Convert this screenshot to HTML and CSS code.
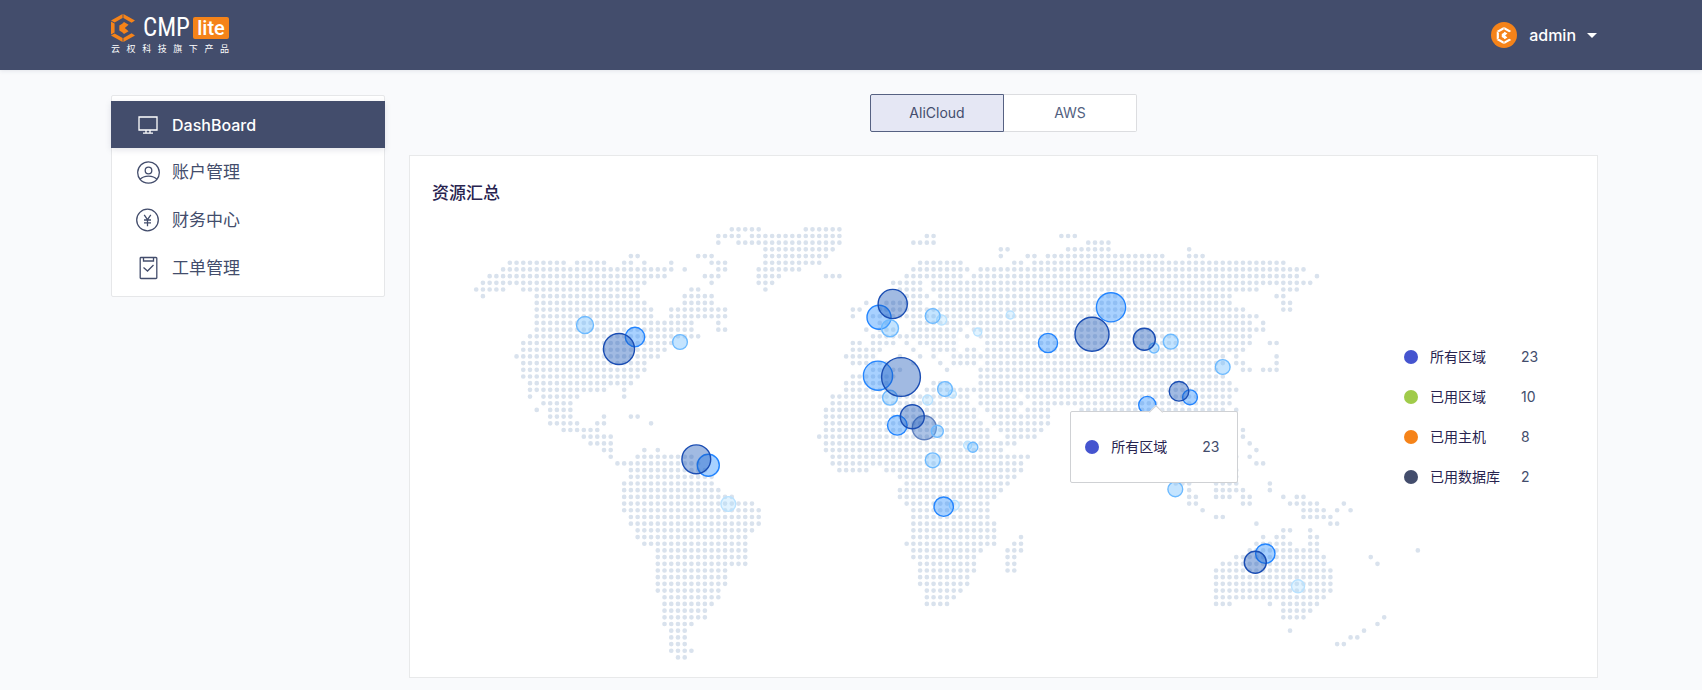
FILE: index.html
```html
<!DOCTYPE html>
<html lang="zh-CN">
<head>
<meta charset="utf-8">
<meta name="viewport" content="width=device-width, initial-scale=1">
<title>CMP lite</title>
<link rel="stylesheet" href="styles.css">
</head>
<body>
<svg class="defs" aria-hidden="true">
  <symbol id="mark" viewBox="0 0 24 28">
    <path d="M11.600 0v4L3.600 8.600 0 6.600zM12.400 0 24 6.600l-3.400 2.200L12.400 4zM0 7.600l3.600 2v9L0 20.600zM0 21.500l3.600-2.100 8 4.600v4zM12.400 28v-4l8.200-4.800L24 21.400z" fill="currentColor"/>
    <path d="m13 8 4.600 2.800-3.800 3.200 3.800 3.200L13 20l-1.800-1.800-2.900-1.700v-5l2.900-1.700z" fill="currentColor"/>
  </symbol>
</svg>

<header class="topbar">
  <a class="brand" href="#">
    <span class="brand-row">
      <svg class="brand-mark" aria-hidden="true"><use href="#mark"/></svg>
      <span class="brand-name">CMP</span>
      <span class="brand-tag">lite</span>
    </span>
    <span class="brand-sub">云 权 科 技 旗 下 产 品</span>
  </a>
  <button class="user" type="button">
    <span class="avatar"><svg class="avatar-mark" aria-hidden="true"><use href="#mark"/></svg></span>
    <span>admin</span>
    <span class="caret"></span>
  </button>
</header>

<div class="layout">
  <nav class="sidebar">
    <a class="nav-item nav-item-active" href="#">
      <svg class="nav-icon" viewBox="0 0 24 24" aria-hidden="true"><path d="M3 4h18v13H3zM10 17v3m4-3v3M7 20.200h10"/></svg>
      DashBoard
    </a>
    <a class="nav-item" href="#">
      <svg class="nav-icon" viewBox="0 0 24 24" aria-hidden="true"><path d="M4.200 19.500a10.800 10.800 0 1 1 16.600 0M4 19.400c1.800-2 4.800-3.300 8.500-3.300s6.700 1.300 8.500 3.300c-2 2.400-5 3.700-8.500 3.700S6 21.800 4 19.400z"/><circle cx="12.500" cy="10.500" r="3.300"/></svg>
      账户管理
    </a>
    <a class="nav-item" href="#">
      <svg class="nav-icon" viewBox="0 0 24 24" aria-hidden="true"><circle cx="11.500" cy="12" r="10.800"/><path d="m8.200 6.800 3.300 4.700 3.300-4.700M11.500 11.500v6.700M8 12h7M8 14.800h7"/></svg>
      财务中心
    </a>
    <a class="nav-item" href="#">
      <svg class="nav-icon" viewBox="0 0 24 24" aria-hidden="true"><path d="M5 1.500h15a.8.8 0 0 1 .8.8v19.400a.8.8 0 0 1-.8.8H5a.8.8 0 0 1-.8-.8V2.300a.8.8 0 0 1 .8-.8zM7.500 1.500V5h10V1.500M7.500 11.500l4 3.500 6-6"/></svg>
      工单管理
    </a>
  </nav>

  <main class="main">
    <div class="tabs">
      <button class="tab tab-active" type="button">AliCloud</button>
      <button class="tab" type="button">AWS</button>
    </div>

    <section class="panel">
      <h1 class="panel-title">资源汇总</h1>
      <div class="panel-body">
        <div class="map-wrap">
          <svg class="map" viewBox="474 222 930 440" role="img" aria-label="资源汇总">
            <path id="land" class="land" transform="translate(476.200 229.300) scale(6.726 6.690)"/>
            <g id="bubbles"></g>
          </svg>
          <div class="tooltip">
            <span class="dot dot-all"></span>
            <span class="label">所有区域</span>
            <span class="value">23</span>
          </div>
        </div>
        <ul class="legend">
          <li class="legend-item"><span class="dot dot-all"></span><span class="label">所有区域</span><span class="value">23</span></li>
          <li class="legend-item"><span class="dot dot-region"></span><span class="label">已用区域</span><span class="value">10</span></li>
          <li class="legend-item"><span class="dot dot-host"></span><span class="label">已用主机</span><span class="value">8</span></li>
          <li class="legend-item"><span class="dot dot-db"></span><span class="label">已用数据库</span><span class="value">2</span></li>
        </ul>
      </div>
    </section>
  </main>
</div>
<script src="map.js"></script>
</body>
</html>
```

FILE: styles.css
```css
* {
  box-sizing: border-box;
}

body {
  margin: 0;
  min-height: 100vh;
  background: #f9fafc;
  color: #434d6c;
  font-family: Inter, "Noto Sans CJK SC", sans-serif;
  font-size: 14px;
  line-height: 20px;
}

a {
  color: inherit;
  text-decoration: none;
}

button {
  padding: 0;
  border: 0;
  background: none;
  color: inherit;
  font: inherit;
  cursor: pointer;
}

.defs {
  position: absolute;
  width: 0;
  height: 0;
}

/* Header */
.topbar {
  display: flex;
  align-items: center;
  justify-content: space-between;
  height: 70px;
  padding: 0 105px 0 111px;
  background: #434d6c;
  color: #fff;
  box-shadow: 0 1px 4px rgba(67, 77, 108, 0.12);
}

.brand {
  width: 118px;
}

.brand-row {
  display: flex;
  align-items: center;
  height: 28px;
}

.brand-mark {
  width: 24px;
  height: 28px;
  color: #f58319;
}

.brand-name {
  margin-left: 8px;
  font-family: "Liberation Sans Narrow", "Roboto Condensed", Roboto, sans-serif;
  font-size: 25px;
  line-height: 28px;
}

.brand-tag {
  width: 36px;
  margin-left: auto;
  border-radius: 2px;
  background: #f58319;
  font-family: Roboto, sans-serif;
  font-size: 20px;
  font-weight: 500;
  line-height: 22px;
  text-align: center;
}

.brand-sub {
  display: block;
  font-size: 9px;
  line-height: 14px;
  text-align-last: justify;
}

.user {
  display: flex;
  align-items: center;
  font-size: 16px;
  font-weight: 500;
}

.avatar {
  display: grid;
  place-items: center;
  width: 26px;
  height: 26px;
  margin-right: 12px;
  border-radius: 50%;
  background: #f58319;
}

.avatar-mark {
  width: 16px;
  height: 17px;
}

.caret {
  margin-left: 11px;
  border: 5px solid transparent;
  border-top-color: #fff;
  border-bottom: 0;
}

/* Page columns */
.layout {
  display: grid;
  grid-template-columns: 274px minmax(0, 1fr);
  align-items: start;
  gap: 24px;
  padding: 24px 104px 11px 111px;
}

.sidebar {
  margin-top: 1px;
  padding: 5px 0 4px;
  border: 1px solid #e6e7e9;
  border-radius: 2px;
  background: #fff;
}

.nav-item {
  display: flex;
  align-items: center;
  gap: 12px;
  height: 48px;
  padding-left: 24px;
  font-size: 17px;
}

.nav-item-active {
  height: 47px;
  margin: 0 -1px;
  padding-left: 25px;
  background: #434d6c;
  color: #fff;
  font-size: 16px;
  font-weight: 500;
  box-shadow: 0 2px 6px rgba(67, 77, 108, 0.15);
}

.nav-icon {
  width: 24px;
  height: 24px;
  fill: none;
  stroke: currentColor;
  stroke-width: 1.3;
}

.tabs {
  display: flex;
  justify-content: center;
  margin-bottom: 23px;
}

.tab {
  width: 133px;
  height: 38px;
  border: 1px solid #dcdde0;
  border-left: 0;
  border-radius: 0 2px 2px 0;
  background: #fff;
  color: #52617f;
}

.tab-active {
  width: 134px;
  border: 1px solid #566182;
  border-radius: 2px 0 0 2px;
  background: #e5e7f4;
  color: #434d6c;
}

.panel {
  padding: 25px 0 15px 22px;
  border: 1px solid #e8e9ea;
  background: #fff;
}

.panel-title {
  margin: 0 0 17px;
  color: #28234f;
  font-size: 17px;
  font-weight: 500;
  line-height: 24px;
}

/* Map and legend */
.panel-body {
  display: flex;
  align-items: flex-start;
  padding-left: 42px;
}

.map-wrap {
  position: relative;
  flex: 1;
}

.map {
  display: block;
  width: 100%;
  overflow: visible;
}

.land {
  fill: none;
  stroke: #d9e2ed;
  stroke-width: 0.7;
  stroke-linecap: round;
  stroke-dasharray: 0 1;
}

.bubble {
  stroke-width: 1.4;
}

.bubble-navy {
  fill: rgba(20, 82, 182, 0.4);
  stroke: #1a4db3;
}

.bubble-slate {
  fill: rgba(20, 82, 182, 0.35);
  stroke: #5f80bf;
}

.bubble-blue {
  fill: rgba(38, 139, 255, 0.4);
  stroke: #2385ff;
}

.bubble-sky {
  fill: rgba(107, 187, 255, 0.4);
  stroke: #6dbaff;
}

.bubble-pale {
  fill: rgba(170, 220, 255, 0.35);
  stroke: #b9e2ff;
}

.tooltip {
  position: absolute;
  top: 43%;
  left: calc(64% + 1px);
  display: flex;
  align-items: center;
  width: 168px;
  height: 72px;
  padding-left: 14px;
  border: 1px solid #cfd1d4;
  border-radius: 2px;
  background: #fff;
}

.tooltip::before {
  position: absolute;
  top: -5px;
  left: 80px;
  width: 9px;
  height: 9px;
  border: 1px solid #cfd1d4;
  border-right: 0;
  border-bottom: 0;
  background: #fff;
  content: "";
  transform: rotate(45deg);
}

.legend {
  display: grid;
  gap: 20px;
  width: 193px;
  margin: 125px 0 0;
  padding: 0;
  list-style: none;
}

.legend-item {
  display: flex;
  align-items: center;
}

.dot {
  width: 14px;
  height: 14px;
  margin-right: 12px;
  border-radius: 50%;
}

.dot-all {
  background: #4554cf;
}

.dot-region {
  background: #a0cb4a;
}

.dot-host {
  background: #f58319;
}

.dot-db {
  background: #434d6c;
}

.label {
  width: 91px;
  color: #28234f;
}
```

FILE: map.js
```js
// Land mask: one string per grid row, each entry a column or a column range.
const rows = [
  "38-42 49-54",
  "36-39 41-54 67-68 87-89",
  "36 39-54 65-68 91-94",
  "43-53 78-79 88-94 106",
  "23-24 33-35 43-52 78 82-83 85-102 106-108",
  "5-13 15-19 22-23 25 29 35-37 43-51 66-72 80-81 83-120",
  "4-29 31 36-37 42-48 65-73 75-123",
  "2-28 34-36 42-45 52-54 64-72 74-122 125",
  "1-25 35 42-44 62-66 68-124",
  "0-4 7-24 32-33 43 63-66 68-116 120-122",
  "1 9-24 31-35 64-67 69-112 119-120",
  "9-25 31-35 58 61-66 68-112 120-121",
  "9-26 29-37 56-57 60-114 120-121",
  "9-26 29-37 56 59-116",
  "9-32 36 60-61 65-115 117",
  "9-32 36-37 58 60-62 65-72 74-117",
  "8-33 59-71 73 75-115",
  "7-29 56-57 59-62 64 66-71 76-115 118-119",
  "7-28 56-60 65 68-71 73-74 76-114",
  "6-27 55-59 63 66 68 71-111 113 119",
  "7-25 56-61 65 69 71-74 76-111 113-114 119",
  "7-25 59-60 62-63 70 75-110 114-115 117-119",
  "7-24 56-62 75-111",
  "8-23 55-61 68-70 75-112",
  "8-19 22 55-61 67-74 75-113",
  "8 10-15 22 53-73 75-80 82-112",
  "10-14 53-73 75-81 83-112",
  "9 11-14 52-74 76-80 82-85 90-111 113",
  "11-14 19 23-24 52-74 77-85",
  "11-15 18-19 26 52-75 77-85",
  "13-18 52-76 78-84 114",
  "16-20 51-76 79-83 114",
  "17-20 52-80 115",
  "19-20 25 27 52-78 116",
  "20 24-32 53-82 113 115",
  "21-33 53-81 116-117",
  "23-34 54-58 61-81 113",
  "23-35 63-80 113",
  "22-35 64-79 104-106 110-113 118",
  "22-36 63-78 106 110-114 118",
  "22-38 63-77 106-107 110-112 114-115 120 122-123",
  "22-41 64-76 106-107 114-115 121-125 129",
  "22-42 65-76 108 123-126 128 130",
  "23-42 65-76 110-111 123-127",
  "23-42 65-77 116 127-128",
  "24-41 65-77 120-121 124",
  "24-40 65-77 81 117 119-120 124-125",
  "25-40 64-77 80-81 116-121 124-125",
  "27-40 65-75 79-81 115-125 140",
  "27-40 65-74 79-80 113-126 133",
  "27-40 66-74 79-80 111-126 134",
  "27-37 66-74 79-80 110-127",
  "27-37 66-73 110-127",
  "27-37 66-73 110-127",
  "27-36 67-72 110-127",
  "28-36 67-71 110-126",
  "28-35 67-70 110-112 118 120-125",
  "28-34 120-124",
  "28-34 120-123 135",
  "28-32 134",
  "29-31 121 132",
  "29-31 130-131",
  "29-31 128-129",
  "29-32",
  "30-31"
];

// Each run becomes a subpath whose dash pattern puts a dot on every column.
const path = rows.map((row, y) => row.split(" ").map(run => {
  const [from, to = from] = run.split("-").map(Number);
  return `M${from} ${y}h${to - from + 0.05}`;
}).join("")).join("");
document.getElementById("land").setAttribute("d", path);

// Regions: [x, y, radius, tone]
const bubbles = [
  [585, 325, 8.5, "sky"], [635, 337, 9.7, "blue"], [619, 349, 15.5, "navy"], [680, 342, 7.4, "sky"],
  [879, 317.3, 12, "blue"], [892.7, 304, 14.6, "navy"], [890, 328.3, 8.5, "sky"],
  [941.7, 320, 5, "pale"], [932.7, 316, 7.4, "sky"], [977.7, 332, 4, "pale"], [1010.3, 315, 4, "pale"],
  [1048, 343, 9.6, "blue"], [1111, 307.3, 14.6, "blue"], [1092, 334.3, 17, "navy"],
  [878, 375.7, 14.6, "blue"], [890, 397.7, 7.4, "sky"], [901, 377, 19.4, "navy"],
  [927.7, 400, 5, "pale"], [952.3, 394, 4, "pale"], [945, 389, 7.4, "sky"],
  [897.3, 425.3, 9.8, "blue"], [924.3, 427.7, 12, "slate"], [912.3, 416.7, 12, "navy"], [937.3, 431.3, 6, "sky"],
  [967.7, 445.3, 4, "pale"], [972.8, 447.3, 5, "sky"],
  [1154, 348, 5, "sky"], [1144.3, 339.3, 11, "navy"], [1170.7, 341.7, 7.4, "sky"], [1222.7, 367, 7.4, "sky"],
  [1190, 397.3, 7.4, "blue"], [1179, 391.3, 9.8, "navy"], [1147.3, 405, 8.6, "blue"],
  [708.3, 465.3, 11, "blue"], [696.3, 459.3, 14.4, "navy"], [728.3, 504, 7.4, "pale"],
  [932.7, 460.3, 7.4, "sky"], [954.3, 505.3, 5, "pale"], [943.7, 506.7, 9.7, "blue"],
  [1175.3, 489.3, 7.4, "sky"], [1265.3, 553.7, 9.7, "blue"], [1255.3, 562.3, 11, "navy"], [1298, 586.3, 6.5, "pale"]
];

const layer = document.getElementById("bubbles");
for (const [x, y, r, tone] of bubbles) {
  const circle = document.createElementNS("http://www.w3.org/2000/svg", "circle");
  circle.setAttribute("class", `bubble bubble-${tone}`);
  circle.setAttribute("cx", x);
  circle.setAttribute("cy", y);
  circle.setAttribute("r", r);
  layer.append(circle);
}
```
